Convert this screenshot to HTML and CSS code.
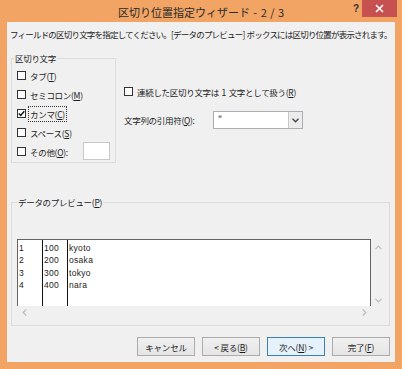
FILE: index.html
```html
<!DOCTYPE html>
<html lang="ja">

<head>
    <meta charset="UTF-8">
    <title>区切り位置指定ウィザード</title>
    <link rel="stylesheet" href="styles.css">
</head>

<body>
    <div class="window">
        <div class="titlebar">
            <div></div>
            <div class="title">区切り位置指定ウィザード - 2 / 3</div>
            <div class="controls">
                <span class="help">?</span>
                <span class="close">
                    <svg width="9" height="9" viewBox="0 0 9 9"><path d="M1 1L8 8M8 1L1 8" stroke="#fff" stroke-width="1.6" /></svg>
                </span>
            </div>
        </div>

        <div class="client">
            <p class="intro">フィールドの区切り文字を指定してください。[データのプレビュー] ボックスには区切り位置が表示されます。</p>

            <div class="options">
                <fieldset class="group delims">
                    <legend>区切り文字</legend>
                    <div class="check"><span class="box"></span><span>タブ(<u>T</u>)</span></div>
                    <div class="check"><span class="box"></span><span>セミコロン(<u>M</u>)</span></div>
                    <div class="check"><span class="box">
                        <svg width="7" height="7" viewBox="0 0 7 7"><path d="M0.8 3.6L2.7 5.5L6.3 1.2" fill="none" stroke="#111" stroke-width="1.4" /></svg>
                    </span><span class="focus">カンマ(<u>C</u>)</span></div>
                    <div class="check"><span class="box"></span><span>スペース(<u>S</u>)</span></div>
                    <div class="check"><span class="box"></span><span>その他(<u>O</u>):</span><span class="other"></span></div>
                </fieldset>

                <div class="side">
                    <div class="check"><span class="box"></span><span>連続した区切り文字は 1 文字として扱う(<u>R</u>)</span></div>
                    <div class="quote-row">
                        <span class="quote-label">文字列の引用符(<u>Q</u>):</span>
                        <div class="combo">
                            <span class="value">"</span>
                            <span class="drop">
                                <svg width="7" height="5" viewBox="0 0 7 5"><path d="M0.5 0.8L3.5 3.8L6.5 0.8" fill="none" stroke="#444" stroke-width="1.3" /></svg>
                            </span>
                        </div>
                    </div>
                </div>
            </div>

            <fieldset class="group preview">
                <legend>データのプレビュー(<u>P</u>)</legend>
                <div class="preview-area">
                    <div class="grid">
                        <div class="col c1">
                            <div>1</div><div>2</div><div>3</div><div>4</div>
                        </div>
                        <div class="col c2">
                            <div>100</div><div>200</div><div>300</div><div>400</div>
                        </div>
                        <div class="col c3">
                            <div>kyoto</div><div>osaka</div><div>tokyo</div><div>nara</div>
                        </div>
                    </div>
                    <div class="vscroll">
                        <svg width="7" height="5" viewBox="0 0 7 5"><path d="M0.5 4.2L3.5 1.2L6.5 4.2" fill="none" stroke="#bbb" stroke-width="1.2" /></svg>
                        <svg width="7" height="5" viewBox="0 0 7 5"><path d="M0.5 0.8L3.5 3.8L6.5 0.8" fill="none" stroke="#bbb" stroke-width="1.2" /></svg>
                    </div>
                </div>
                <div class="hscroll">
                    <svg width="5" height="7" viewBox="0 0 5 7"><path d="M4.2 0.5L1.2 3.5L4.2 6.5" fill="none" stroke="#bbb" stroke-width="1.2" /></svg>
                    <svg width="5" height="7" viewBox="0 0 5 7"><path d="M0.8 0.5L3.8 3.5L0.8 6.5" fill="none" stroke="#bbb" stroke-width="1.2" /></svg>
                </div>
            </fieldset>

            <div class="buttons">
                <button>キャンセル</button>
                <button>&lt; 戻る(<u>B</u>)</button>
                <button class="default">次へ(<u>N</u>) &gt;</button>
                <button>完了(<u>F</u>)</button>
            </div>
        </div>
    </div>
</body>

</html>
```

FILE: styles.css
```css
body {
    margin: 0;
    background-color: #f1a464;
    font-family: "Noto Sans CJK JP", "Noto Sans", sans-serif;
}

.window {
    width: 402px;
    height: 369px;
    display: flex;
    flex-direction: column;
}

.titlebar {
    height: 22px;
    display: grid;
    grid-template-columns: 1fr auto 1fr;
}

.title {
    font-size: 11px;
    line-height: 22px;
    color: #2b2b2b;
    padding-top: 1px;
    word-spacing: 1px;
}

.controls {
    display: flex;
    justify-content: flex-end;
    align-items: flex-start;
}

.help {
    font-family: "Liberation Sans", sans-serif;
    font-weight: bold;
    font-size: 10px;
    color: #333;
    line-height: 18px;
    margin-right: 3px;
}

.close {
    width: 35px;
    height: 17px;
    margin-right: 5px;
    background-color: #c75050;
    display: flex;
    justify-content: center;
    align-items: center;
}

.client {
    flex: 1;
    margin: 0 7px 7px 7px;
    background-color: #f0f0f0;
    font-size: 8.5px;
    letter-spacing: -0.3px;
    word-spacing: 1px;
    color: #1a1a1a;
    display: flex;
    flex-direction: column;
}

.intro {
    margin: 0;
    padding: 6px 0 0 3px;
    line-height: 12px;
    white-space: nowrap;
    letter-spacing: -0.8px;
}

.options {
    display: flex;
    gap: 8px;
    margin-top: 12px;
}

.group {
    margin: 0;
    border: 1px solid #dcdcdc;
    padding: 0 0 0 2px;
    min-width: 0;
}

.group legend {
    padding: 0 1px;
    line-height: 12px;
}

.delims {
    width: 105px;
    box-sizing: border-box;
    margin-left: 4px;
    padding-bottom: 1px;
}

.check {
    height: 19px;
    display: flex;
    align-items: center;
    gap: 4px;
    margin-left: 3px;
    white-space: nowrap;
}

.delims .check:first-of-type {
    margin-top: 2px;
}

.box {
    width: 9px;
    height: 9px;
    box-sizing: border-box;
    border: 1px solid #333;
    background-color: #fff;
    display: flex;
    justify-content: center;
    align-items: center;
}

.focus {
    outline: 1px dotted #333;
    outline-offset: 1px;
}

.other {
    width: 27px;
    height: 18px;
    box-sizing: border-box;
    border: 1px solid #c8c8c8;
    background-color: #fff;
    margin: -2px 5px 0 auto;
}

.side {
    padding-top: 30px;
}

.side .check {
    margin-left: 0;
}

.quote-row {
    display: flex;
    align-items: center;
    margin-top: 10px;
    height: 18px;
}

.quote-label {
    width: 89px;
}

.combo {
    width: 90px;
    height: 18px;
    box-sizing: border-box;
    border: 1px solid #abadb3;
    background-color: #fff;
    display: flex;
}

.value {
    flex: 1;
    padding-left: 4px;
    line-height: 14px;
}

.drop {
    width: 13px;
    border-left: 1px solid #c8c8c8;
    background-color: #ececec;
    display: flex;
    justify-content: center;
    align-items: center;
}

.preview {
    margin: 33px 5px 0 4px;
    padding: 0 0 6px 5px;
}

.preview-area {
    margin-top: 31px;
    display: flex;
}

.grid {
    width: 354px;
    height: 67px;
    box-sizing: border-box;
    border: 1px solid #646464;
    border-bottom: none;
    background-color: #fff;
    display: flex;
    font-family: "Liberation Sans", sans-serif;
    font-size: 8.5px;
    letter-spacing: 0.3px;
    line-height: 12.4px;
}

.col {
    padding: 2px 0 0 1px;
}

.c1,
.c2 {
    width: 23px;
    border-right: 1px solid #111;
}

.vscroll {
    width: 14px;
    display: flex;
    flex-direction: column;
    justify-content: space-between;
    align-items: center;
    padding: 6px 0 3px;
}

.hscroll {
    width: 354px;
    height: 13px;
    display: flex;
    justify-content: space-between;
    align-items: center;
    padding: 0 4px 0 5px;
    box-sizing: border-box;
}

.buttons {
    display: flex;
    justify-content: flex-end;
    gap: 7px;
    margin: 11px 5px 0 0;
}

.buttons button {
    width: 58px;
    height: 19px;
    padding: 0;
    font-family: inherit;
    font-size: 8.5px;
    letter-spacing: -0.2px;
    color: #1a1a1a;
    border: 1px solid #acacac;
    background: linear-gradient(#f0f0f0, #e5e5e5);
}

.buttons .default {
    border-color: #3c7fb1;
    background: #e5f1fb;
}
```
